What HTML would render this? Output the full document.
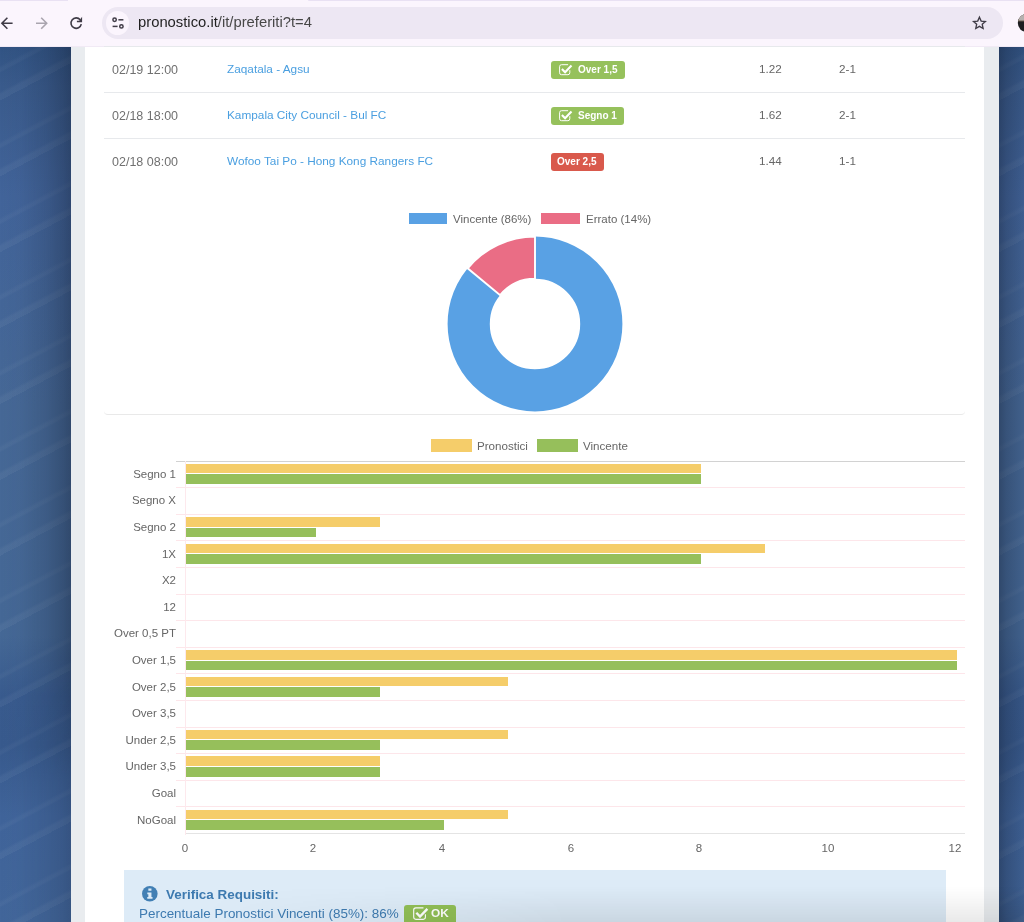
<!DOCTYPE html>
<html>
<head>
<meta charset="utf-8">
<title>pronostico</title>
<style>
html,body{margin:0;padding:0;}
html{width:1024px;height:922px;overflow:hidden;}
body{width:1024px;height:922px;overflow:hidden;position:relative;background:#3d5d8c;font-family:"Liberation Sans",sans-serif;}
.abs{position:absolute;}
.t{position:absolute;white-space:nowrap;line-height:1;will-change:transform;}
#bg{left:0;top:46px;width:1024px;height:876px;background:
repeating-linear-gradient(-28deg, rgba(255,255,255,0.045) 0px, rgba(255,255,255,0.045) 5px, rgba(255,255,255,0) 8px, rgba(255,255,255,0) 24px, rgba(255,255,255,0.03) 26px, rgba(255,255,255,0.03) 28px, rgba(255,255,255,0) 31px, rgba(255,255,255,0) 67px),
linear-gradient(to bottom,#325484 0px,#3a5b8c 40px,#42649a 150px,#466896 360px,#456896 590px,#395b8e 650px,#385a8d 700px,#40649a 770px,#42669a 100%);}
#shl{left:0;top:46px;width:70.5px;height:876px;-webkit-mask-image:linear-gradient(to bottom,#000 0%,#000 70%,rgba(0,0,0,0.55) 84%,rgba(0,0,0,0.55) 100%);mask-image:linear-gradient(to bottom,#000 0%,#000 70%,rgba(0,0,0,0.55) 84%,rgba(0,0,0,0.55) 100%);background:linear-gradient(to right,rgba(18,28,48,0) 0%,rgba(18,28,48,0.03) 30%,rgba(18,28,48,0.16) 65%,rgba(18,28,48,0.30) 88%,rgba(18,28,48,0.40) 100%);}
#shr{left:998.5px;top:46px;width:25.5px;height:876px;background:linear-gradient(to left,rgba(18,28,48,0.10) 0%,rgba(18,28,48,0.28) 70%,rgba(18,28,48,0.42) 100%);}
#toolbar{left:0;top:0;width:1024px;height:45.6px;background:#fbf5fd;border-bottom:1px solid #f1eaf5;}
#tabstub{left:0;top:0;width:68px;height:1px;background:#e9e1f3;}
#pill{left:102px;top:6.8px;width:900.9px;height:32.6px;border-radius:16.3px;background:#ede7f3;}
#chip{left:105.9px;top:11.3px;width:23.4px;height:23.4px;border-radius:12px;background:#fbf5fd;}
#url{left:137.5px;top:15px;font-size:14.8px;color:#1f1f1f;}
#url span{color:#474747;}
#panel{left:70.5px;top:46px;width:928px;height:876px;background:#e9ecef;}
#content{left:85px;top:46px;width:899px;height:876px;background:#fff;}
.hr{position:absolute;height:1px;background:#e7e9ec;}
.date{font-size:12.5px;color:#707070;transform:translateY(0.4px);}
.lnk{font-size:11.8px;color:#4a9fe0;}
.num{font-size:11.7px;color:#666;}
.badge{position:absolute;height:17.5px;border-radius:3px;color:#fff;font-weight:bold;font-size:10px;}
.g{background:#96c15c;}
.r{background:#d9594c;}
.lab{font-size:11.5px;color:#666;text-align:right;width:80px;}
.tick{font-size:11.5px;color:#666;text-align:center;width:30px;}
.by{position:absolute;background:#f5cd6a;left:185.5px;}
.bg{position:absolute;background:#96bf5b;left:185.5px;}
.gl{position:absolute;left:176px;width:789px;height:1px;background:#fde6ea;}
</style>
</head>
<body>
<div id="bg" class="abs"></div>
<div id="shl" class="abs"></div><div id="shr" class="abs"></div>
<div id="panel" class="abs"></div>
<div id="content" class="abs"></div>

<!-- toolbar -->
<div id="toolbar" class="abs"></div>
<div id="tabstub" class="abs"></div><div class="abs" style="left:308px;top:0;width:716px;height:1px;background:#e9e1f3;border-bottom-left-radius:2px;"></div>
<div id="pill" class="abs"></div>
<div id="chip" class="abs"></div>
<div id="url" class="t">pronostico.it<span>/it/preferiti?t=4</span></div>

<!-- table -->
<div class="hr" style="left:104px;top:46px;width:861px;"></div>
<div class="hr" style="left:104px;top:92px;width:861px;"></div>
<div class="hr" style="left:104px;top:138px;width:861px;"></div>

<div class="t date" style="left:112px;top:64px;">02/19 12:00</div>
<div class="t date" style="left:112px;top:110px;">02/18 18:00</div>
<div class="t date" style="left:112px;top:156px;">02/18 08:00</div>

<div class="t lnk" style="left:227px;top:64px;">Zaqatala - Agsu</div>
<div class="t lnk" style="left:227px;top:110px;">Kampala City Council - Bul FC</div>
<div class="t lnk" style="left:227px;top:156px;">Wofoo Tai Po - Hong Kong Rangers FC</div>

<div class="t num" style="left:759px;top:63.4px;">1.22</div>
<div class="t num" style="left:759px;top:109.4px;">1.62</div>
<div class="t num" style="left:759px;top:155.4px;">1.44</div>
<div class="t num" style="left:839px;top:63.4px;">2-1</div>
<div class="t num" style="left:839px;top:109.4px;">2-1</div>
<div class="t num" style="left:839px;top:155.4px;">1-1</div>

<!-- badges -->
<div class="badge g" style="left:550.7px;top:61.2px;width:74.2px;">
  <svg class="abs" style="left:8.2px;top:3.0px;" width="14" height="12" viewBox="0 0 14 12"><path d="M10.8 6.2v2.6a1.9 1.9 0 0 1-1.9 1.9H2.5a1.9 1.9 0 0 1-1.9-1.9V2.6a1.9 1.9 0 0 1 1.9-1.9h6.6" fill="none" stroke="#fff" stroke-width="1"/><path d="M2.9 5.0l3.2 3.3L12.5 1.6" fill="none" stroke="#fff" stroke-width="2.1"/></svg>
  <div class="t" style="left:27.4px;top:3.9px;">Over 1,5</div>
</div>
<div class="badge g" style="left:550.7px;top:107.2px;width:73.2px;">
  <svg class="abs" style="left:8.2px;top:3.0px;" width="14" height="12" viewBox="0 0 14 12"><path d="M10.8 6.2v2.6a1.9 1.9 0 0 1-1.9 1.9H2.5a1.9 1.9 0 0 1-1.9-1.9V2.6a1.9 1.9 0 0 1 1.9-1.9h6.6" fill="none" stroke="#fff" stroke-width="1"/><path d="M2.9 5.0l3.2 3.3L12.5 1.6" fill="none" stroke="#fff" stroke-width="2.1"/></svg>
  <div class="t" style="left:27.4px;top:3.9px;">Segno 1</div>
</div>
<div class="badge r" style="left:550.7px;top:153.2px;width:53.2px;">
  <div class="t" style="left:6.2px;top:3.9px;">Over 2,5</div>
</div>

<!-- doughnut -->
<div class="abs" style="left:408.7px;top:213.1px;width:38.8px;height:11.2px;background:#59a1e4;"></div>
<div class="t" style="left:453px;top:213.8px;font-size:11.5px;color:#666;">Vincente (86%)</div>
<div class="abs" style="left:541.2px;top:213.1px;width:39px;height:11.2px;background:#ea6d85;"></div>
<div class="t" style="left:586px;top:213.8px;font-size:11.5px;color:#666;">Errato (14%)</div>
<svg class="abs" style="left:435px;top:224px;" width="200" height="200" viewBox="435 224 200 200">
  <circle cx="535" cy="324.0" r="66.30" fill="none" stroke="#59a1e4" stroke-width="42.20"/>
  <path id="redarc" d="M467.66 268.29A87.4 87.4 0 0 1 535 236.60L535 278.80A45.2 45.2 0 0 0 500.17 295.19Z" fill="#ea6d85" stroke="#fff" stroke-width="1.9"/>
</svg>
<div class="abs" style="left:104px;top:410px;width:861px;height:4px;border-bottom:1px solid #e9e9e9;border-radius:0 0 4px 4px;box-sizing:content-box;"></div>

<!-- bar chart -->
<div class="abs" style="left:431.2px;top:438.5px;width:40.9px;height:13px;background:#f5cd6a;"></div>
<div class="t" style="left:477.4px;top:440px;font-size:11.6px;color:#666;">Pronostici</div>
<div class="abs" style="left:537.1px;top:438.5px;width:40.9px;height:13px;background:#96bf5b;"></div>
<div class="t" style="left:582.8px;top:440px;font-size:11.6px;color:#666;">Vincente</div>
<div class="abs" style="left:175.7px;top:460.60px;width:789px;height:1px;background:#d2d2d2;"></div>
<div class="gl" style="top:487.20px;"></div>
<div class="gl" style="top:513.80px;"></div>
<div class="gl" style="top:540.40px;"></div>
<div class="gl" style="top:567.00px;"></div>
<div class="gl" style="top:593.60px;"></div>
<div class="gl" style="top:620.20px;"></div>
<div class="gl" style="top:646.80px;"></div>
<div class="gl" style="top:673.40px;"></div>
<div class="gl" style="top:700.00px;"></div>
<div class="gl" style="top:726.60px;"></div>
<div class="gl" style="top:753.20px;"></div>
<div class="gl" style="top:779.80px;"></div>
<div class="gl" style="top:806.40px;"></div>
<div class="abs" style="left:185.5px;top:833.00px;width:779.2px;height:1px;background:#e4e4e4;"></div>
<div class="abs" style="left:185px;top:461.10px;width:1px;height:374.40px;background:#fde9ed;"></div>
<div class="t lab" style="left:95.5px;top:468.80px;">Segno 1</div>
<div class="by" style="top:463.70px;height:9.80px;width:515.14px;"></div>
<div class="bg" style="top:474.45px;height:9.80px;width:515.14px;"></div>
<div class="t lab" style="left:95.5px;top:495.40px;">Segno X</div>
<div class="t lab" style="left:95.5px;top:522.00px;">Segno 2</div>
<div class="by" style="top:516.90px;height:9.80px;width:194.49px;"></div>
<div class="bg" style="top:527.65px;height:9.80px;width:130.36px;"></div>
<div class="t lab" style="left:95.5px;top:548.60px;">1X</div>
<div class="by" style="top:543.50px;height:9.80px;width:579.27px;"></div>
<div class="bg" style="top:554.25px;height:9.80px;width:515.14px;"></div>
<div class="t lab" style="left:95.5px;top:575.20px;">X2</div>
<div class="t lab" style="left:95.5px;top:601.80px;">12</div>
<div class="t lab" style="left:95.5px;top:628.40px;">Over 0,5 PT</div>
<div class="t lab" style="left:95.5px;top:655.00px;">Over 1,5</div>
<div class="by" style="top:649.90px;height:9.80px;width:771.66px;"></div>
<div class="bg" style="top:660.65px;height:9.80px;width:771.66px;"></div>
<div class="t lab" style="left:95.5px;top:681.60px;">Over 2,5</div>
<div class="by" style="top:676.50px;height:9.80px;width:322.75px;"></div>
<div class="bg" style="top:687.25px;height:9.80px;width:194.49px;"></div>
<div class="t lab" style="left:95.5px;top:708.20px;">Over 3,5</div>
<div class="t lab" style="left:95.5px;top:734.80px;">Under 2,5</div>
<div class="by" style="top:729.70px;height:9.80px;width:322.75px;"></div>
<div class="bg" style="top:740.45px;height:9.80px;width:194.49px;"></div>
<div class="t lab" style="left:95.5px;top:761.40px;">Under 3,5</div>
<div class="by" style="top:756.30px;height:9.80px;width:194.49px;"></div>
<div class="bg" style="top:767.05px;height:9.80px;width:194.49px;"></div>
<div class="t lab" style="left:95.5px;top:788.00px;">Goal</div>
<div class="t lab" style="left:95.5px;top:814.60px;">NoGoal</div>
<div class="by" style="top:809.50px;height:9.80px;width:322.75px;"></div>
<div class="bg" style="top:820.25px;height:9.80px;width:258.62px;"></div>
<div class="t tick" style="left:169.80px;top:842.5px;">0</div>
<div class="t tick" style="left:298.38px;top:842.5px;">2</div>
<div class="t tick" style="left:426.97px;top:842.5px;">4</div>
<div class="t tick" style="left:555.55px;top:842.5px;">6</div>
<div class="t tick" style="left:684.13px;top:842.5px;">8</div>
<div class="t tick" style="left:812.72px;top:842.5px;">10</div>
<div class="t tick" style="left:940.30px;top:842.5px;">12</div>

<!-- alert -->
<div class="abs" style="left:123.8px;top:869.8px;width:822.2px;height:52.2px;background:#ddebf7;"></div>
<svg class="abs" style="left:142.2px;top:886.3px;" width="15.6" height="15.6" viewBox="0 0 16 16"><circle cx="8" cy="8" r="8" fill="#417fb4"/><path d="M6.5 2.5h3.2v2.5h-3.2zM5.5 6.6h4.2v4.7h1.1v1.9h-5.4v-1.9h1.1v-2.8h-1.1z" fill="#ddebf7"/></svg>
<div class="t" id="ver" style="left:166px;top:888.1px;font-size:13.45px;font-weight:bold;color:#3d7ab0;">Verifica Requisiti:</div>
<div class="t" id="perc" style="left:139px;top:906.9px;font-size:13.45px;color:#3d7ab0;">Percentuale Pronostici Vincenti (85%): 86%</div>
<div class="abs" style="left:403.9px;top:904.5px;width:52.1px;height:17.5px;border-radius:3px 3px 0 0;background:#91bf56;">
  <svg class="abs" style="left:9.2px;top:2.4px;" width="16.1" height="13.8" viewBox="0 0 14 12"><path d="M10.8 6.2v2.6a1.9 1.9 0 0 1-1.9 1.9H2.5a1.9 1.9 0 0 1-1.9-1.9V2.6a1.9 1.9 0 0 1 1.9-1.9h6.6" fill="none" stroke="#fff" stroke-width="1"/><path d="M2.9 5.0l3.2 3.3L12.5 1.6" fill="none" stroke="#fff" stroke-width="2.1"/></svg>
  <div class="t" style="left:27.6px;top:3.6px;font-size:11.8px;font-weight:bold;color:#fff;">OK</div>
</div>
<div class="abs" style="left:200px;top:886px;width:824px;height:36px;background:linear-gradient(to bottom,rgba(0,0,0,0) 0%,rgba(0,0,0,0.03) 40%,rgba(0,0,0,0.085) 100%);-webkit-mask-image:linear-gradient(to right,rgba(0,0,0,0) 0%,rgba(0,0,0,1) 45%);mask-image:linear-gradient(to right,rgba(0,0,0,0) 0%,rgba(0,0,0,1) 45%);"></div>

<!-- toolbar icons -->
<svg class="abs" style="left:0;top:0;" width="1024" height="46" viewBox="0 0 1024 46">
  <g fill="none" stroke="#3f3b46" stroke-width="1.6" stroke-linecap="butt" stroke-linejoin="miter">
    <path d="M12.6 23.2H2.4M7.4 17.7L1.9 23.2L7.4 28.7"/>
    <path d="M80.18 19.76A5.2 5.2 0 1 0 81.29 24.18"/><path d="M82.1 16.8V22.2H76.9V20.7H79.2Z" fill="#3f3b46" stroke="none"/>
  </g>
  <g fill="none" stroke="#aaa5af" stroke-width="1.6">
    <path d="M36 23.2H46.2M41.2 17.7L46.7 23.2L41.2 28.7"/>
  </g>
  <g fill="none" stroke="#3f3b46" stroke-width="1.5">
    <circle cx="114.6" cy="19.8" r="1.7"/><path d="M118.4 19.8h5"/>
    <circle cx="121.4" cy="26.4" r="1.7"/><path d="M112.6 26.4h5"/>
  </g>
  <path d="M979.45 17.20L981.18 21.07L985.39 21.52L982.24 24.36L983.12 28.51L979.45 26.39L975.78 28.51L976.66 24.36L973.51 21.52L977.72 21.07Z" fill="none" stroke="#3f3b46" stroke-width="1.35" stroke-linejoin="miter"/>
  <circle cx="1026.7" cy="23.1" r="8.9" fill="#1d1d20"/><path d="M1017.9 21.6A8.9 8.9 0 0 1 1035.5 21.6Z" fill="#6b5a4c"/><path d="M1018.16 20.5A8.9 8.9 0 0 1 1035.24 20.5Z" fill="#b5b1af"/>
</svg>

</body>
</html>
